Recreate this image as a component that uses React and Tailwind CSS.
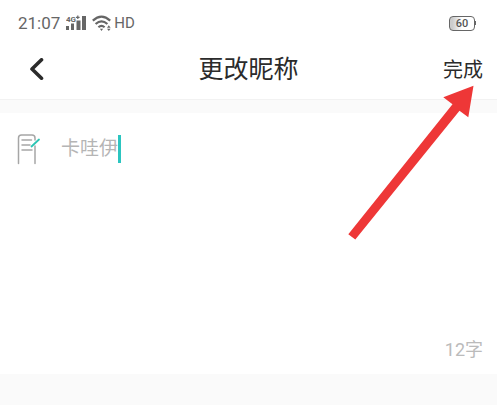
import React, { useState } from 'react'

function SignalIcon() {
    return (
        <svg width="22" height="17" viewBox="0 0 22 17" fill="#666666" aria-hidden="true">
            <text x="0" y="7" fontSize="8" fontWeight="700" fontFamily="Roboto, sans-serif">4G</text>
            <path d="M11.2 0.5h1.2v1.2h1.2v1.2h-1.2v1.2h-1.2v-1.2h-1.2v-1.2h1.2z" />
            <rect x="0" y="11" width="3" height="4" />
            <rect x="5" y="8.5" width="3" height="6.5" />
            <rect x="10.5" y="5.5" width="4" height="9.5" />
            <rect x="16" y="1" width="4" height="14" />
        </svg>
    )
}

function WifiIcon() {
    return (
        <svg width="20" height="17" viewBox="0 0 20 17" fill="none" stroke="#666666" strokeWidth="2.2" aria-hidden="true">
            <path d="M0.8 5.6Q9.5 -2.4 18.2 5.6" />
            <path d="M3.6 9Q9.5 3.6 15.4 9" />
            <path d="M6.4 12.2Q9.5 9.4 12.6 12.2" />
            <path d="M7.9 13.8h3.2l-1.6 2.2z" fill="#666666" stroke="none" />
            <path d="M15 12.7l1.8-2.4 1.8 2.4zM15 13.7l1.8 2.4 1.8-2.4z" fill="#666666" stroke="none" />
        </svg>
    )
}

function Battery() {
    return (
        <div className="flex items-center">
            <div className="flex h-[15px] w-[26px] items-center justify-center rounded border border-[#666666] bg-linear-to-r from-[#cccccc] from-10% to-white to-50% text-[11px] leading-none font-medium text-[#555555]">
                60
            </div>
            <div className="h-1 w-px bg-[#666666]" />
        </div>
    )
}

function StatusBar() {
    return (
        <div className="flex h-[46px] items-center justify-between pr-[21px] pl-[18px] text-[#666666]">
            <div className="flex items-center">
                <span className="text-[17px] leading-5">21:07</span>
                <div className="ml-[6px] flex items-center gap-1">
                    <SignalIcon />
                    <WifiIcon />
                </div>
                <span className="ml-[2px] text-[15px] leading-5">HD</span>
            </div>
            <Battery />
        </div>
    )
}

function Header() {
    return (
        <header className="grid h-[54px] grid-cols-[1fr_auto_1fr] items-center border-b border-[#f2f2f2] px-[14px] pb-[6px] text-[#2b2b2b]">
            <button type="button" aria-label="返回" className="justify-self-start px-[14px]">
                <svg width="18" height="24" viewBox="0 0 18 24" fill="none" stroke="#2b2b2b" strokeWidth="3.6" strokeLinecap="round" strokeLinejoin="round">
                    <path d="M13.5 1.8L4 11L13.5 20.2" />
                </svg>
            </button>
            <h1 className="text-[25px] leading-8">更改昵称</h1>
            <button type="button" className="justify-self-end text-[20px] leading-8">完成</button>
        </header>
    )
}

function NoteIcon() {
    return (
        <svg width="24" height="32" viewBox="0 0 24 32" fill="none" stroke="#a6a6a6" strokeWidth="1.5" strokeLinecap="round" aria-hidden="true">
            <path d="M1.5 30.5V5Q1.5 2 4.5 2H15Q18 2 18 5V7M18 13V30.5" />
            <path d="M5 7H14.5M5 12H13M5 17H15" />
            <path d="M14.5 13.5L22 6.5" stroke="#2cc5b4" strokeWidth="1.8" />
        </svg>
    )
}

function Arrow() {
    return (
        <svg className="pointer-events-none absolute top-[85px] right-[23px]" width="126" height="155" viewBox="0 0 126 155" aria-hidden="true">
            <path d="M125.5 0.7L95.3 12.3L104.5 19.3L0.3 149.3L7.3 154.5L111.5 25.7L120.3 32.3Z" fill="#ee3737" />
        </svg>
    )
}

function App() {
    const [name, setName] = useState('卡哇伊')

    return (
        <div className="min-h-screen bg-white pr-[7px] font-[Roboto,'Noto_Sans_CJK_SC',sans-serif]">
            <div className="relative flex min-h-screen flex-col bg-[#fafafa]">
                <div className="bg-white">
                    <StatusBar />
                    <Header />
                </div>

                <main className="mt-[13px] flex h-[261px] flex-col justify-between bg-white pt-5 pr-[14px] pb-3 pl-[17px]">
                    <div className="flex items-center">
                        <NoteIcon />
                        <input
                            aria-label="昵称"
                            value={name}
                            onChange={(e) => setName(e.target.value)}
                            className="ml-5 field-sizing-content h-7 text-[19px] leading-7 text-[#b5b5b5] caret-[#2cc5c0] outline-none"
                        />
                        <span className="h-7 w-[3px] bg-[#2cc5c0]" />
                    </div>
                    <p className="text-right text-[18px] leading-6 text-[#bbbbbb]">12字</p>
                </main>

                <Arrow />
            </div>
        </div>
    )
}

export default App
